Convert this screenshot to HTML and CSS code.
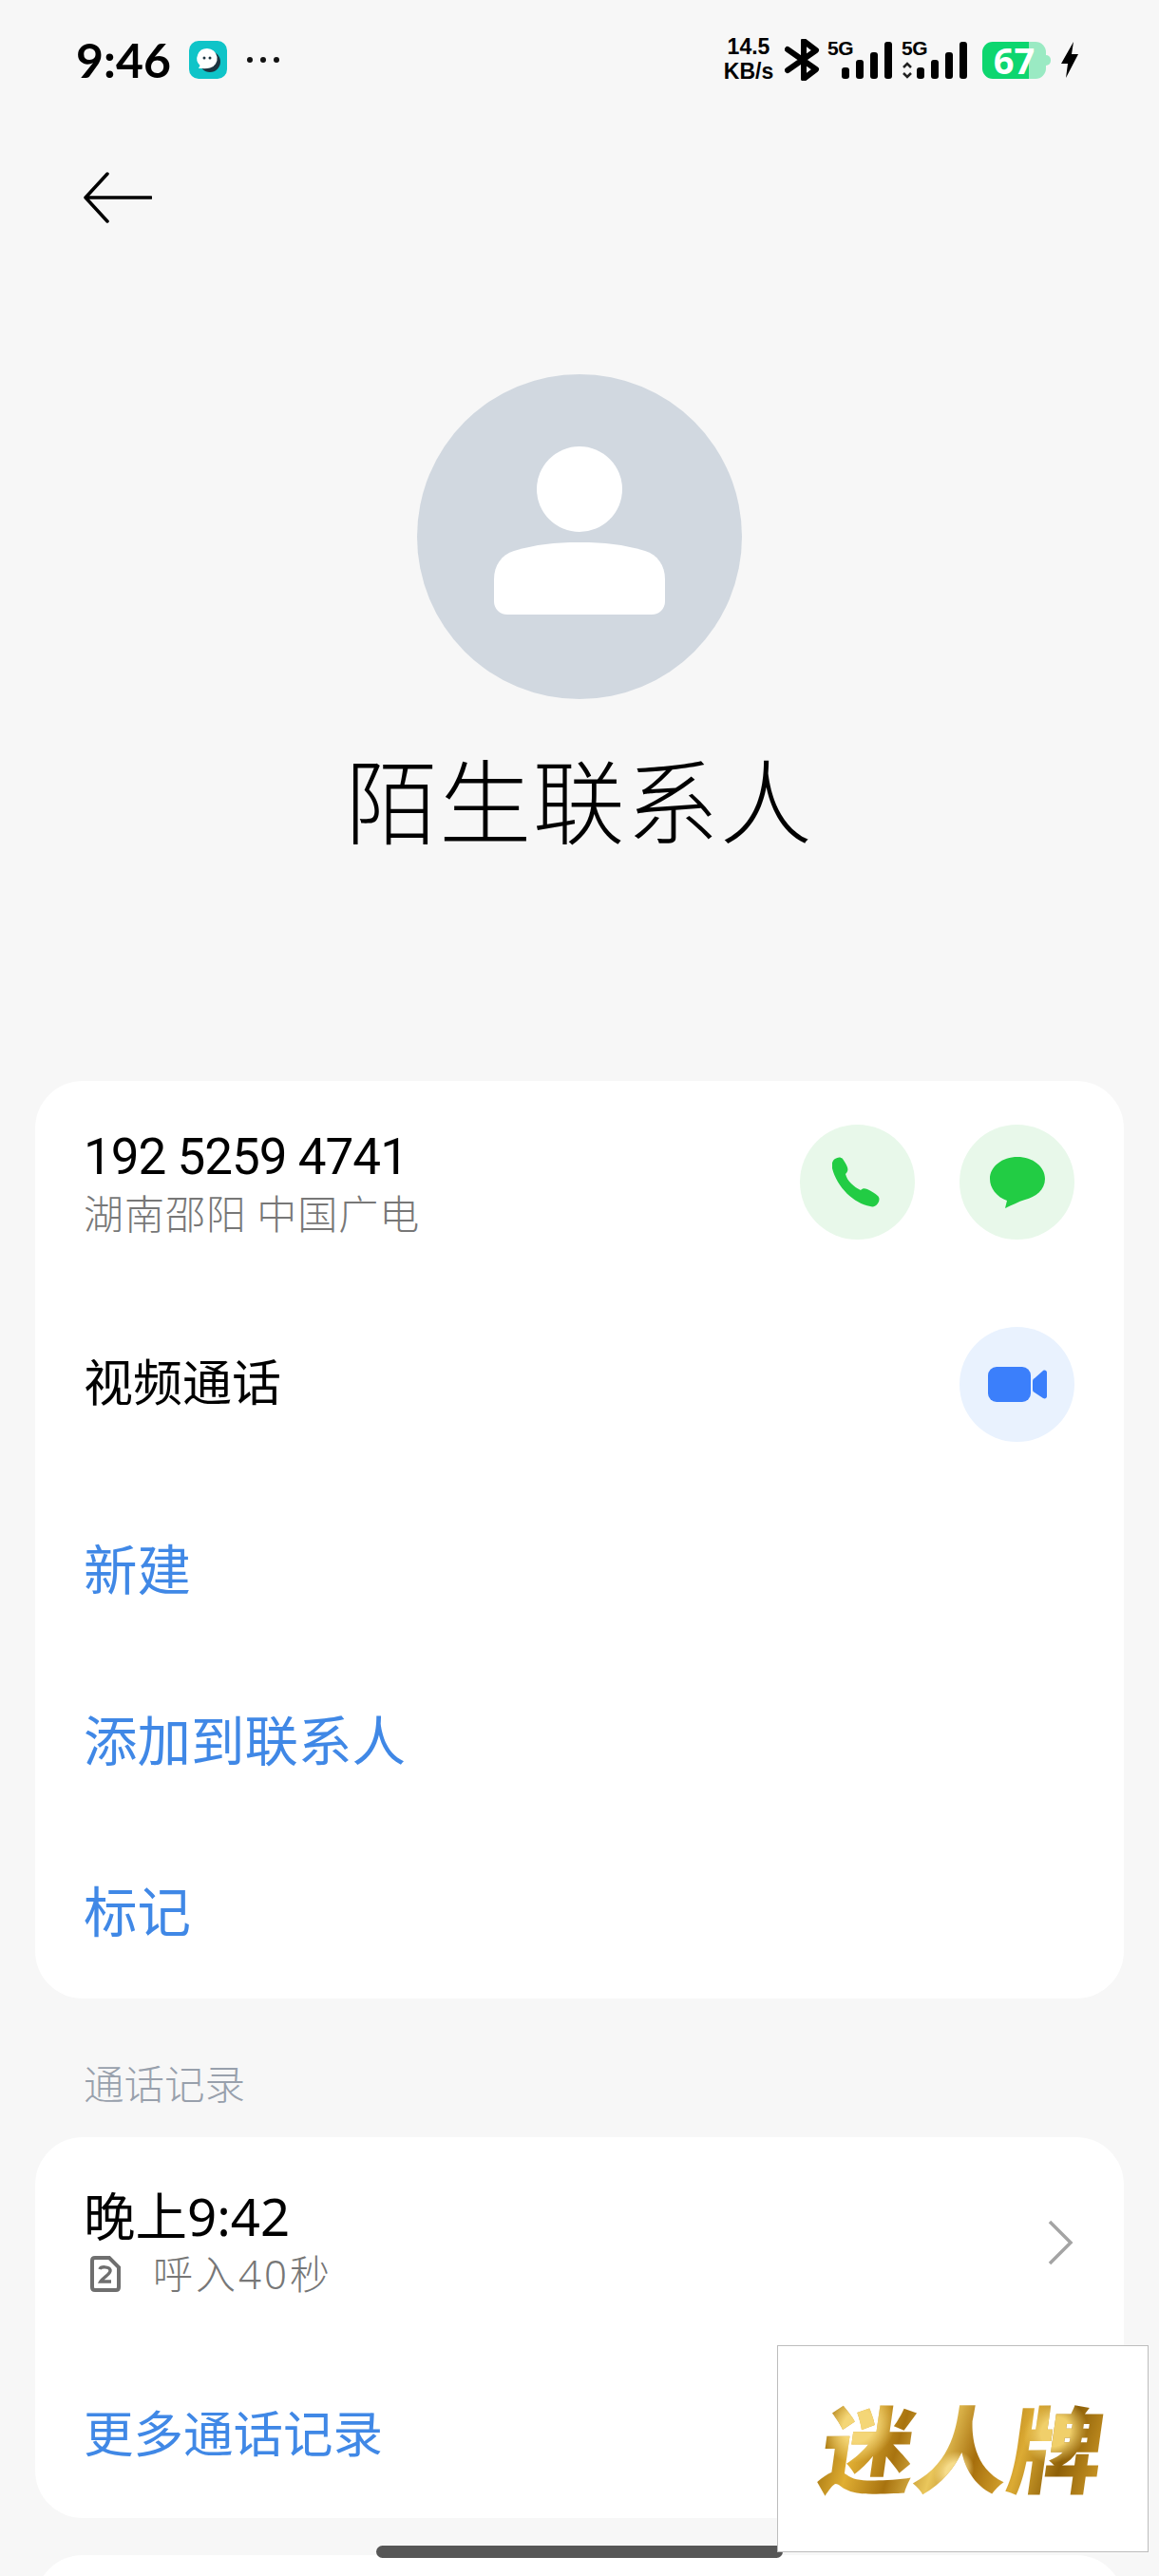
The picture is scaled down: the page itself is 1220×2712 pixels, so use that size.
FILE: index.html
```html
<!DOCTYPE html>
<html lang="zh-CN">
<head>
  <meta charset="UTF-8" />
  <title>陌生联系人</title>
  <link rel="stylesheet" href="styles.css">
</head>
<body>
  <div class="page">

    <div class="status-bar">
      <div class="status-left">
        <span class="clock">9:46</span>
        <svg class="app-icon" viewBox="0 0 40 40">
          <rect width="40" height="40" rx="10" fill="#0fc4c8"/>
          <circle cx="22" cy="22" r="11" fill="#1d3440"/>
          <path d="M19 8a10.500 10.500 0 0 1 3 20.600c-3 .8-7 .6-12 .4l1.500-3A10.500 10.500 0 0 1 19 8z" fill="#fff"/>
          <circle cx="16" cy="18" r="1.500" fill="#1d3440"/>
          <circle cx="22" cy="18" r="1.500" fill="#1d3440"/>
        </svg>
        <span class="dots"><i></i><i></i><i></i></span>
      </div>
      <div class="status-right">
        <span class="speed">14.5<br>KB/s</span>
        <svg class="bt" viewBox="0 0 38 44">
          <path d="M3 11l30 21-13 10V2l13 10L3 33" fill="none" stroke="#000" stroke-width="6" stroke-linejoin="round" stroke-linecap="round"/>
        </svg>
        <div class="signal">
          <span class="net">5G</span>
          <div class="bars"><i class="b1"></i><i class="b2"></i><i class="b3"></i><i class="b4"></i></div>
        </div>
        <div class="signal signal-two">
          <span class="net">5G</span>
          <svg class="updown" viewBox="0 0 12 18"><path d="M2 6l4-4 4 4M2 12l4 4 4-4" fill="none" stroke="#222" stroke-width="2.500"/></svg>
          <div class="bars"><i class="b1"></i><i class="b2"></i><i class="b3"></i><i class="b4"></i></div>
        </div>
        <div class="battery">67</div>
        <svg class="bolt" viewBox="0 0 20 38"><path d="M14 0l-2 13h7L6 38l2-15H1z" fill="#000"/></svg>
      </div>
    </div>

    <div class="nav">
      <svg class="back" viewBox="0 0 72 54">
        <path d="M25 2L2 27l23 25M3 27h68" fill="none" stroke="#000" stroke-width="3.500" stroke-linecap="round" stroke-linejoin="round"/>
      </svg>
    </div>

    <div class="header">
      <svg class="avatar" viewBox="0 0 342 342">
        <circle cx="171" cy="171" r="171" fill="#d1d8e0"/>
        <circle cx="171" cy="121" r="45" fill="#fff"/>
        <path d="M81 216c0-15 8-26 21-30 24-7 42-9 69-9s45 2 69 9c13 4 21 15 21 30v23c0 8-6 14-14 14H95c-8 0-14-6-14-14z" fill="#fff"/>
      </svg>
      <h1 class="name">陌生联系人</h1>
    </div>

    <div class="card">
      <div class="row row-contact">
        <div class="row-text">
          <div class="number">192 5259 4741</div>
          <div class="sub">湖南邵阳 中国广电</div>
        </div>
        <div class="actions">
          <span class="round round-green">
            <svg class="ico-phone" viewBox="0 0 53 53">
              <path d="M3 2c3-2 6-2 8 0 2 3 4 6 5 9 1 3 0 5-2 7 1 4 3 7 6 10 3 3 6 5 10 7 2-2 4-2 7-1 4 2 8 4 11 7 2 2 2 5 0 8-2 3-5 4-8 3C23 49 5 32 0 12-1 8 0 4 3 2z" fill="#22cc44"/>
            </svg>
          </span>
          <span class="round round-green">
            <svg class="ico-msg" viewBox="0 0 58 54">
              <path d="M29 0c16 0 29 10 29 23 0 12-10 19-21 22-7 2-14 6-21 9l2-8C7 42 0 33 0 23 0 10 13 0 29 0z" fill="#22cc44"/>
            </svg>
          </span>
        </div>
      </div>
      <div class="row row-video">
        <span class="label-md">视频通话</span>
        <span class="round round-blue">
          <svg class="ico-video" viewBox="0 0 62 37">
            <rect width="45" height="37" rx="9" fill="#3b7ffb"/>
            <path d="M49 12l9-8c2-1 4 0 4 2v25c0 2-2 3-4 2l-9-6c-2-1-2-2-2-4V16c0-2 0-3 2-4z" fill="#3b7ffb"/>
          </svg>
        </span>
      </div>
      <div class="row row-link row-new"><span class="link">新建</span></div>
      <div class="row row-link"><span class="link">添加到联系人</span></div>
      <div class="row row-link"><span class="link">标记</span></div>
    </div>

    <div class="section-title">通话记录</div>

    <div class="card">
      <div class="row row-call">
        <div class="row-text">
          <div class="call-time">晚上9:42</div>
          <div class="call-info">
            <svg class="sim" viewBox="0 0 32 38">
              <path d="M5 2h15l10 10v21c0 2-1 3-3 3H5c-2 0-3-1-3-3V5c0-2 1-3 3-3z" fill="none" stroke="#6f6f6f" stroke-width="4"/>
              <path d="M10 14c1-3 10-3 11 1 1 4-7 7-10 12h11" fill="none" stroke="#6f6f6f" stroke-width="3.500"/>
            </svg>
            <span>呼入40秒</span>
          </div>
        </div>
        <svg class="chevron" viewBox="0 0 28 50">
          <path d="M3 3l22 22L3 47" fill="none" stroke="#a4a4a4" stroke-width="3.500"/>
        </svg>
      </div>
      <div class="row row-more"><span class="link-md">更多通话记录</span></div>
    </div>

    <div class="card card-next"></div>

    <div class="home-bar"></div>
    <div class="watermark"><span class="gold">迷人牌</span></div>
  </div>
</body>
</html>
```

FILE: styles.css
```css
* {
  box-sizing: border-box;
}
html, body {
  margin: 0;
  padding: 0;
}
body {
  background: #f7f7f7;
  color: #000;
  font-family: "Noto Sans", "Noto Sans CJK SC", sans-serif;
}
.page {
  position: relative;
  height: 2712px;
  overflow: hidden;
}

/* status bar */
.status-bar {
  height: 124px;
  padding: 43px 83px 0 80px;
  display: flex;
  justify-content: space-between;
  align-items: flex-start;
}
.status-left {
  display: flex;
  align-items: center;
  height: 40px;
}
.clock {
  font-family: Lato, sans-serif;
  font-weight: 700;
  font-size: 50px;
  line-height: 40px;
  width: 119px;
}
.app-icon {
  width: 40px;
  height: 40px;
}
.dots {
  display: flex;
  gap: 8px;
  margin-left: 21px;
}
.dots i {
  width: 6px;
  height: 6px;
  border-radius: 50%;
  background: #111;
}
.status-right {
  display: flex;
  align-items: center;
  height: 40px;
}
.speed {
  font-family: "Liberation Sans", sans-serif;
  font-weight: 700;
  font-size: 23px;
  line-height: 26px;
  width: 56px;
  text-align: center;
  margin-top: -2px;
  white-space: nowrap;
}
.bt {
  width: 38px;
  height: 44px;
  margin-left: 10px;
}
.signal {
  position: relative;
  width: 68px;
  height: 40px;
  margin-left: 7px;
}
.signal-two {
  width: 69px;
  margin-left: 10px;
}
.net {
  position: absolute;
  left: 0;
  top: -4px;
  font-family: "Liberation Sans", sans-serif;
  font-weight: 700;
  font-size: 21px;
  line-height: 24px;
  letter-spacing: -0.500px;
}
.updown {
  position: absolute;
  left: 0;
  bottom: 0;
  width: 12px;
  height: 18px;
}
.bars {
  position: absolute;
  right: 0;
  bottom: 0;
  display: flex;
  align-items: flex-end;
  gap: 7px;
}
.bars i {
  width: 8px;
  background: #000;
  border-radius: 3px;
}
.bars .b1 { height: 12px; }
.bars .b2 { height: 20px; }
.bars .b3 { height: 28px; }
.bars .b4 { height: 39px; }
.battery {
  position: relative;
  width: 67px;
  height: 39px;
  margin-left: 16px;
  border-radius: 11px;
  background: linear-gradient(90deg, #0dd66f 0 73%, #9aeac3 73% 100%);
  color: #fff;
  font-family: "Open Sans", sans-serif;
  font-weight: 700;
  font-size: 38px;
  line-height: 39px;
  text-align: center;
}
.battery::after {
  content: "";
  position: absolute;
  right: -5px;
  top: 14px;
  width: 5px;
  height: 11px;
  background: #9aeac3;
  border-radius: 0 5px 5px 0;
}
.bolt {
  width: 22px;
  height: 38px;
  margin-left: 14px;
}

/* nav + header */
.nav {
  height: 270px;
  padding: 57px 0 0 88px;
}
.back {
  display: block;
  width: 72px;
  height: 54px;
}
.header {
  height: 744px;
  display: flex;
  flex-direction: column;
  align-items: center;
}
.avatar {
  width: 342px;
  height: 342px;
  flex: none;
}
.name {
  margin: 43px 0 0;
  font-family: "Noto Sans CJK SC", sans-serif;
  font-weight: 300;
  font-size: 97px;
  line-height: 120px;
  letter-spacing: 1.500px;
}

/* cards */
.card {
  margin: 0 37px;
  background: #fff;
  border-radius: 50px;
}
.row {
  display: flex;
  align-items: center;
  justify-content: space-between;
  padding: 0 52px 0 51px;
}
.row-contact { height: 213px; }
.row-video { height: 212px; }
.row-link { height: 180px; }
.row-link.row-new { height: 181px; }
.row-call { height: 222px; padding-right: 53px; }
.row-more { height: 179px; }
.number {
  font-family: Roboto, sans-serif;
  font-size: 53px;
  line-height: 60px;
  letter-spacing: -1px;
}
.sub {
  font-family: "Noto Sans CJK SC", sans-serif;
  font-weight: 300;
  font-size: 42px;
  line-height: 50px;
  color: #777;
  margin-top: 3px;
  letter-spacing: 1px;
}
.actions {
  display: flex;
  gap: 47px;
}
.round {
  width: 121px;
  height: 121px;
  border-radius: 50%;
  display: flex;
  align-items: center;
  justify-content: center;
  flex: none;
}
.round-green { background: #e8f8ea; }
.round-blue { background: #e9f2fe; }
.ico-phone { width: 53px; height: 53px; }
.ico-msg { width: 58px; height: 54px; }
.ico-video { width: 62px; height: 37px; }
.label-md {
  font-family: "Noto Sans CJK SC", sans-serif;
  font-size: 52px;
  font-weight: 400;
  padding-bottom: 10px;
}
.link, .link-md {
  font-family: "Noto Sans CJK SC", sans-serif;
  color: #4088e6;
  font-size: 56.500px;
  font-weight: 400;
  padding-bottom: 10px;
}
.link-md {
  font-size: 52.500px;
  padding-bottom: 6px;
}
.section-title {
  height: 146px;
  padding: 60px 0 0 88px;
  font-family: "Noto Sans CJK SC", sans-serif;
  font-weight: 300;
  font-size: 42.500px;
  line-height: 56px;
  color: #98a0ac;
}
.call-time {
  font-family: "Noto Sans", "Noto Sans CJK SC", sans-serif;
  font-size: 54.500px;
  line-height: 60px;
  font-weight: 400;
}
.call-info {
  display: flex;
  align-items: center;
  margin-top: 6px;
  font-family: "Noto Sans", "Noto Sans CJK SC", sans-serif;
  font-weight: 300;
  font-size: 42px;
  line-height: 50px;
  color: #777;
  letter-spacing: 3px;
}
.sim {
  width: 32px;
  height: 38px;
  margin: 0 34px 0 7px;
}
.chevron {
  width: 28px;
  height: 50px;
}
.card-next {
  margin-top: 39px;
  height: 200px;
}

/* overlays */
.home-bar {
  position: absolute;
  left: 396px;
  top: 2680px;
  width: 428px;
  height: 13px;
  border-radius: 7px;
  background: #565656;
}
.watermark {
  position: absolute;
  left: 818px;
  top: 2469px;
  width: 391px;
  height: 218px;
  background: #fff;
  border: 1px solid #bdbdbd;
  display: flex;
  align-items: center;
  justify-content: center;
}
.gold {
  font-family: "Noto Sans CJK SC", sans-serif;
  font-weight: 900;
  font-size: 99px;
  line-height: 110px;
  padding-bottom: 8px;
  transform: skewX(-8deg);
  background:
    radial-gradient(circle at 12% 30%, #f4d677 0 6%, transparent 14%),
    radial-gradient(circle at 48% 70%, #f6dc8a 0 5%, transparent 12%),
    radial-gradient(circle at 82% 35%, #f0cf6a 0 6%, transparent 13%),
    linear-gradient(100deg, #9a6a08 0%, #e0ae33 14%, #a8730f 28%, #eac75c 42%, #a66e0c 55%, #dcab34 70%, #8e6008 84%, #d09b28 100%);
  -webkit-background-clip: text;
  background-clip: text;
  color: transparent;
}
```
